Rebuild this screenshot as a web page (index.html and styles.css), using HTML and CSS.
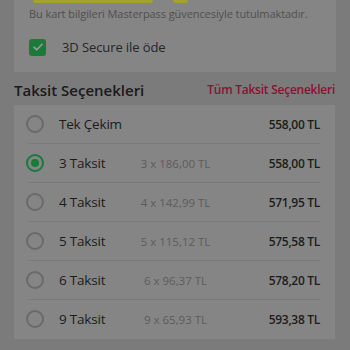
FILE: index.html
```html
<!DOCTYPE html>
<html lang="tr">
<head>
    <meta charset="UTF-8">
    <meta name="viewport" content="width=device-width, initial-scale=1.0">
    <title>Ödeme</title>
    <link rel="stylesheet" href="styles.css">
</head>
<body>
    <div class="card secure">
        <div class="card_top">
            <span class="pill pill_wide"></span>
            <span class="pill pill_small"></span>
        </div>
        <p class="note">Bu kart bilgileri Masterpass güvencesiyle tutulmaktadır.</p>
        <label class="check">
            <span class="check_box">
                <svg width="10" height="8" viewBox="0 0 10 8"><path d="M1 4.2 L3.8 6.8 L9 1.2" fill="none" stroke="#9a9a9a" stroke-width="1.6" stroke-linecap="round" stroke-linejoin="round"/></svg>
            </span>
            <span class="check_label">3D Secure ile öde</span>
        </label>
    </div>

    <div class="section_head">
        <h2>Taksit Seçenekleri</h2>
        <a class="all_link">Tüm Taksit Seçenekleri</a>
    </div>

    <div class="card options">
        <div class="row">
            <span class="radio"></span>
            <span class="row_name">Tek Çekim</span>
            <span class="row_per"></span>
            <span class="row_total">558,00 TL</span>
        </div>
        <div class="row">
            <span class="radio checked"></span>
            <span class="row_name">3 Taksit</span>
            <span class="row_per">3 x 186,00 TL</span>
            <span class="row_total">558,00 TL</span>
        </div>
        <div class="row">
            <span class="radio"></span>
            <span class="row_name">4 Taksit</span>
            <span class="row_per">4 x 142,99 TL</span>
            <span class="row_total">571,95 TL</span>
        </div>
        <div class="row">
            <span class="radio"></span>
            <span class="row_name">5 Taksit</span>
            <span class="row_per">5 x 115,12 TL</span>
            <span class="row_total">575,58 TL</span>
        </div>
        <div class="row">
            <span class="radio"></span>
            <span class="row_name">6 Taksit</span>
            <span class="row_per">6 x 96,37 TL</span>
            <span class="row_total">578,20 TL</span>
        </div>
        <div class="row">
            <span class="radio"></span>
            <span class="row_name">9 Taksit</span>
            <span class="row_per">9 x 65,93 TL</span>
            <span class="row_total">593,38 TL</span>
        </div>
    </div>
</body>
</html>
```

FILE: styles.css
```css
body
{
    margin: 0px;
    background-color: #7b7b7b;
    font-family: "Open Sans", "Noto Sans", sans-serif;
    color: #1c1c1c;
}

.card
{
    background-color: #858585;
}

.secure
{
    margin: 0px 14px 0px 14px;
    height: 72px;
    padding: 0px 15px;
    box-sizing: border-box;
}

.card_top
{
    display: flex;
    height: 3px;
    margin-left: 4px;
}

.pill
{
    height: 3px;
    background-color: #a3a22a;
    border-radius: 0px 0px 3px 3px;
}

.pill_wide
{
    width: 120px;
}

.pill_small
{
    width: 15px;
    margin-left: 20px;
}

.note
{
    margin: 3px 0px 0px 0px;
    font-size: 11px;
    line-height: 16px;
    letter-spacing: -0.08px;
    color: #505050;
}

.check
{
    display: flex;
    align-items: center;
    margin-top: 16px;
}

.check_box
{
    width: 17px;
    height: 17px;
    border-radius: 3px;
    background-color: #197a3a;
    display: flex;
    align-items: center;
    justify-content: center;
}

.check_label
{
    margin-left: 16px;
    font-size: 13px;
    letter-spacing: -0.1px;
    color: #252525;
}

.section_head
{
    display: flex;
    justify-content: space-between;
    align-items: center;
    height: 31px;
    padding: 2px 15px 0px 14px;
}

.section_head h2
{
    margin: 0px;
    font-size: 15px;
    font-weight: 600;
    color: #1a1a1a;
}

.all_link
{
    font-size: 12px;
    font-weight: 600;
    letter-spacing: -0.25px;
    color: #8a1232;
}

.options
{
    margin: 0px 15px 0px 14px;
    padding: 0px 15px 0px 11px;
    height: 234px;
}

.row
{
    display: flex;
    align-items: center;
    height: 38px;
    border-bottom: 1px solid #7a7a7a;
    margin-left: 3px;
}

.row:last-child
{
    border-bottom: none;
}

.radio
{
    width: 14px;
    height: 14px;
    border: 2px solid #6a6a6a;
    border-radius: 50%;
    margin-left: -2px;
    display: flex;
    align-items: center;
    justify-content: center;
}

.radio.checked
{
    border-color: #197a3a;
}

.radio.checked::after
{
    content: "";
    width: 8px;
    height: 8px;
    border-radius: 50%;
    background-color: #197a3a;
}

.row_name
{
    width: 80px;
    margin-left: 15px;
    font-size: 13.5px;
    letter-spacing: -0.2px;
    color: #1c1c1c;
}

.row_per
{
    flex: 1;
    text-align: center;
    font-size: 11.5px;
    color: #5c5c5c;
    margin-left: -18px;
}

.row_total
{
    width: 90px;
    text-align: right;
    font-size: 12px;
    font-weight: 600;
    letter-spacing: -0.3px;
    color: #1c1c1c;
}
```
